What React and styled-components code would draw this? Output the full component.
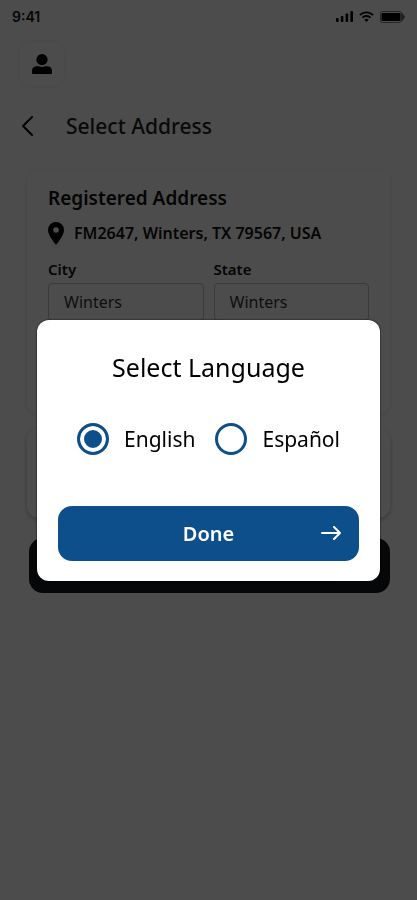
import React, { useState } from "react";
import styled, { createGlobalStyle } from "styled-components";

const languages = [
  { value: "en", label: "English" },
  { value: "es", label: "Español" },
];

const App = () => {
  const [language, setLanguage] = useState("en");
  const [city, setCity] = useState("Winters");
  const [state, setState] = useState("Winters");
  const [open, setOpen] = useState(true);

  return (
    <>
      <GlobalStyle />
      <Page>
        <StatusBar>
          <span>9:41</span>
          <StatusIcons>
            <svg width="17" height="11" viewBox="0 0 17 11">
              <rect x="0" y="7" width="2.600" height="4" rx="0.8" />
              <rect x="4.800" y="5" width="2.600" height="6" rx="0.8" />
              <rect x="9.600" y="2.500" width="2.600" height="8.500" rx="0.8" />
              <rect x="14.400" y="0" width="2.600" height="11" rx="0.8" />
            </svg>
            <svg width="15" height="11" viewBox="0 0 15 11">
              <g fill="none" stroke="#000" strokeWidth="1.9">
                <path d="M0.9 4.1a9.4 9.4 0 0 1 13.2 0" />
                <path d="M3.4 6.7a5.8 5.8 0 0 1 8.2 0" />
              </g>
              <path d="M7.5 11L5.3 8.8a3.1 3.1 0 0 1 4.4 0z" />
            </svg>
            <svg width="25" height="12" viewBox="0 0 25 12">
              <rect x="0.5" y="0.5" width="21" height="11" rx="2" fill="none" stroke="#000" strokeOpacity="0.5" />
              <rect x="1.500" y="2" width="19" height="8" rx="1" />
              <path d="M22 1.500v9L25 6z" opacity="0.6" />
            </svg>
          </StatusIcons>
        </StatusBar>

        <ProfileButton type="button" aria-label="Profile">
          <svg width="20" height="20" viewBox="0 0 20 20">
            <circle cx="10" cy="5.6" r="5.6" />
            <path d="M0 20v-3.200C0 13.600 2.400 12.300 5.500 12.300c1.200 0 2.300 0.700 4.500 0.700s3.300-0.700 4.500-0.700c3.100 0 5.500 1.300 5.500 4.500V19q0 1-1 1H1q-1 0-1-1z" />
          </svg>
        </ProfileButton>

        <TitleRow>
          <BackButton type="button" aria-label="Back">
            <svg width="12" height="20" viewBox="0 0 12 20">
              <path d="M11 1L2 10l9 9" fill="none" stroke="#000" strokeWidth="2" strokeLinecap="round" strokeLinejoin="round" />
            </svg>
          </BackButton>
          <h1>Select Address</h1>
        </TitleRow>

        <Content>
          <AddressCard>
            <h2>Registered Address</h2>
            <Location>
              <svg width="16" height="23" viewBox="0 0 16 23">
                <path
                  fillRule="evenodd"
                  d="M8 0a8 8 0 0 0-8 8c0 5.600 8 15 8 15s8-9.400 8-15a8 8 0 0 0-8-8zm0 5.200a2.800 2.800 0 1 1 0 5.600 2.800 2.800 0 0 1 0-5.600z"
                />
              </svg>
              <span>FM2647, Winters, TX 79567, USA</span>
            </Location>
            <Fields>
              <Field>
                <label htmlFor="city">City</label>
                <input id="city" value={city} onChange={(e) => setCity(e.target.value)} />
              </Field>
              <Field>
                <label htmlFor="state">State</label>
                <input id="state" value={state} onChange={(e) => setState(e.target.value)} />
              </Field>
            </Fields>
          </AddressCard>
          <EmptyCard />
          <SubmitButton type="button" aria-label="Continue" />
        </Content>
      </Page>

      {open && (
        <Overlay>
          <Modal role="dialog" aria-modal="true" aria-labelledby="language-title">
            <h2 id="language-title">Select Language</h2>
            <Options>
              {languages.map((item) => (
                <Option key={item.value}>
                  <input
                    type="radio"
                    name="language"
                    value={item.value}
                    checked={language === item.value}
                    onChange={() => setLanguage(item.value)}
                  />
                  <span>{item.label}</span>
                </Option>
              ))}
            </Options>
            <DoneButton type="button" onClick={() => setOpen(false)}>
              <span>Done</span>
              <svg width="20" height="14" viewBox="0 0 20 14">
                <path d="M1 7h18M13 1l6 6-6 6" fill="none" stroke="#fff" strokeWidth="2" strokeLinecap="round" strokeLinejoin="round" />
              </svg>
            </DoneButton>
          </Modal>
        </Overlay>
      )}
    </>
  );
};

const GlobalStyle = createGlobalStyle`
  * {
    box-sizing: border-box;
  }
  body {
    margin: 0;
    background-color: #fff;
    color: #000;
    font-family: "Noto Sans", "Open Sans", sans-serif;
  }
  h1, h2 {
    margin: 0;
  }
  button, input {
    font-family: inherit;
  }
  svg {
    display: block;
    flex-shrink: 0;
  }
`;

const Page = styled.div`
  min-height: 100vh;
  display: flex;
  flex-direction: column;
`;

const StatusBar = styled.div`
  display: flex;
  align-items: center;
  justify-content: space-between;
  height: 33px;
  padding: 0 12px;
  font-family: Inter, sans-serif;
  font-size: 14px;
  font-weight: 600;
  color: #111;
`;

const StatusIcons = styled.div`
  display: flex;
  align-items: center;
  gap: 6px;
`;

const ProfileButton = styled.button`
  display: flex;
  align-items: center;
  justify-content: center;
  width: 44px;
  height: 44px;
  margin: 9px 20px 0;
  border: none;
  border-radius: 10px;
  background-color: #fff;
  box-shadow: 0 0 6px rgba(0, 0, 0, 0.08);
`;

const TitleRow = styled.div`
  display: flex;
  align-items: center;
  gap: 33px;
  height: 44px;
  margin-top: 18px;
  padding: 0 21px;
  h1 {
    font-size: 21px;
    line-height: 28px;
    font-weight: 500;
    color: #222;
  }
`;

const BackButton = styled.button`
  padding: 0;
  border: none;
  background: none;
`;

const Content = styled.main`
  display: flex;
  flex-direction: column;
  padding: 22px 27px;
`;

const Card = styled.section`
  border-radius: 12px;
  background-color: #fff;
  box-shadow: 0 1px 5px rgba(0, 0, 0, 0.12);
`;

const AddressCard = styled(Card)`
  min-height: 244px;
  padding: 14px 21px;
  color: #111;
  h2 {
    font-size: 19px;
    line-height: 28px;
    font-weight: 600;
  }
`;

const EmptyCard = styled(Card)`
  min-height: 90px;
  margin-top: 14px;
  box-shadow: 0 2px 5px rgba(0, 0, 0, 0.25);
`;

const SubmitButton = styled.button`
  height: 55px;
  margin: 20px 0 0 2px;
  border: none;
  border-radius: 14px;
  background-color: #12181f;
`;

const Location = styled.div`
  display: flex;
  align-items: center;
  gap: 10px;
  margin-top: 9px;
  font-size: 16px;
  line-height: 24px;
  font-weight: 600;
`;

const Fields = styled.div`
  display: flex;
  gap: 10px;
  margin-top: 14px;
`;

const Field = styled.div`
  flex: 1;
  min-width: 0;
  display: flex;
  flex-direction: column;
  gap: 4px;
  label {
    font-size: 15px;
    line-height: 20px;
    font-weight: 600;
  }
  input {
    width: 100%;
    height: 38px;
    padding: 0 15px;
    border: 1px solid #c4c4c4;
    border-radius: 4px;
    background: none;
    color: #333;
    font-size: 16px;
  }
`;

const Overlay = styled.div`
  position: fixed;
  inset: 0;
  display: flex;
  align-items: center;
  justify-content: center;
  padding: 0 37px;
  background-color: rgba(0, 0, 0, 0.7);
`;

const Modal = styled.div`
  width: 100%;
  max-width: 420px;
  display: flex;
  flex-direction: column;
  padding: 31px 21px 20px;
  border-radius: 12px;
  background-color: #fff;
  box-shadow: 0 0 2px #000;
  h2 {
    font-size: 25px;
    line-height: 32px;
    font-weight: 400;
    text-align: center;
  }
`;

const Options = styled.div`
  display: flex;
  justify-content: center;
  gap: 20px;
  margin: 40px 0 51px;
`;

const Option = styled.label`
  display: flex;
  align-items: center;
  gap: 15px;
  font-size: 21px;
  line-height: 32px;
  input {
    appearance: none;
    width: 32px;
    height: 32px;
    margin: 0;
    border: 3px solid #0d4f8b;
    border-radius: 50%;
    background-color: #fff;
  }
  input:checked {
    background-color: #0d4f8b;
    box-shadow: inset 0 0 0 4px #fff;
  }
`;

const DoneButton = styled.button`
  display: grid;
  grid-template-columns: 1fr auto 1fr;
  align-items: center;
  height: 55px;
  padding: 0 18px;
  border: none;
  border-radius: 14px;
  background-color: #0d4f8b;
  color: #fff;
  font-size: 20px;
  font-weight: 600;
  cursor: pointer;
  span {
    grid-column: 2;
  }
  svg {
    justify-self: end;
  }
`;

export default App;
